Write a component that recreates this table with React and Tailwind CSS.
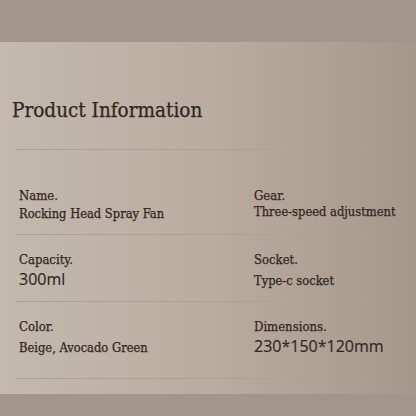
import React from 'react';

const rows = [
    [
        { label: 'Name.', value: 'Rocking Head Spray Fan' },
        { label: 'Gear.', value: 'Three-speed adjustment', tight: true },
    ],
    [
        { label: 'Capacity.', value: '300ml', sans: true },
        { label: 'Socket.', value: 'Type-c socket', low: true },
    ],
    [
        { label: 'Color.', value: 'Beige, Avocado Green', low: true },
        { label: 'Dimensions.', value: '230*150*120mm', sans: true },
    ],
];

const Cell = ({ label, value, sans, tight, low }) => (
    <div className="flex flex-col whitespace-nowrap">
        <span className="text-[13px] leading-[16px]">{label}</span>
        <span
            className={
                sans
                    ? "text-[16px] leading-[20px] mt-[1px] font-['Open_Sans',sans-serif] [-webkit-text-stroke:0.15px_#2f2621]"
                    : 'text-[12.8px] leading-[16px] ' + (tight ? 'mt-[0px]' : low ? 'mt-[5px]' : 'mt-[2px]')
            }
        >
            {value}
        </span>
    </div>
);

const App = () => {
    return (
        <div className="w-[416px] h-[416px] bg-[#a2968a] flex flex-col font-['DejaVu_Serif_Condensed','DejaVu_Serif',serif] text-[#2f2621] [-webkit-text-stroke:0.25px_#2f2621]">
            <div className="h-[42px]" />
            <div className="h-[352px] bg-gradient-to-r from-[#c3b9ad] via-[#b9ad9f] to-[#a69889] pl-[16px] pr-[27px]">
                <h1 className="text-[20.5px] leading-[24px] mt-[56px] -ml-[4px]">Product Information</h1>
                <div className="mt-[27px] border-t border-[#ada195]">
                    {rows.map((row, i) => (
                        <div key={i} className={'grid grid-cols-[235px_1fr] pl-[3px] border-b border-[#ada195] ' + (i === 0 ? 'pt-[38px] h-[85px]' : i === 1 ? 'pt-[17px] h-[67px]' : 'pt-[17px] h-[77px]')}>
                            <Cell {...row[0]} />
                            <Cell {...row[1]} />
                        </div>
                    ))}
                </div>
            </div>
        </div>
    );
};

export default App;
